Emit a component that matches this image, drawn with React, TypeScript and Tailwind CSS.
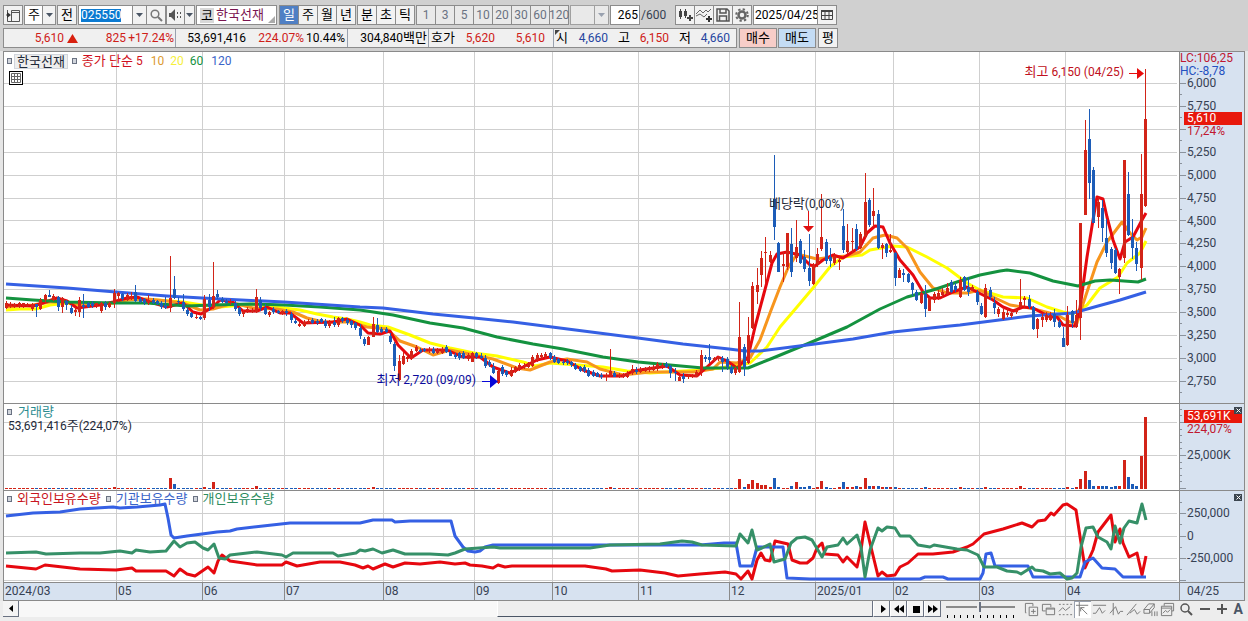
import React, { useState } from "react";

type Point = [number, number];

const FONT = "font-['Roboto','Noto_Sans_CJK_KR',sans-serif]";

// plot geometry
const FIRST_X = 6.3;
const STEP = 4.3156;
const RED = "#d22418";
const BLUE = "#1c5cb8";
const GRID = "#cfcfcf";

const months = [
  { x: 116, label: "05" },
  { x: 202, label: "06" },
  { x: 284, label: "07" },
  { x: 383, label: "08" },
  { x: 474, label: "09" },
  { x: 552, label: "10" },
  { x: 638, label: "11" },
  { x: 729, label: "12" },
  { x: 815, label: "2025/01" },
  { x: 893, label: "02" },
  { x: 979, label: "03" },
  { x: 1065, label: "04" },
];

const priceLevels = [83, 106, 129, 152, 175, 198, 220, 243, 266, 289, 312, 335, 358, 381];
const volumeLevels = [422, 455, 488];
const holdingLevels = [513, 536, 558, 580];

// one candle per trading day: direction, high, body top, body bottom, low
const candleData = `
r 301 303 308 309|r 302 304 306 308|r 303 304 307 308|r 302 303 307 308|r 303 303 306 308|r 303 304 306 307|r 303 304 309 311|b 304 304 307 317
r 298 300 309 310|r 294 295 300 303|b 290 295 297 297|r 294 296 300 301|b 296 297 307 311|r 297 298 307 313|b 300 301 305 310|b 305 308 313 314
r 307 310 312 316|r 297 300 312 317|b 294 305 307 318|b 302 303 307 308|b 301 303 306 308|r 303 303 306 308|r 302 303 311 313|b 301 303 307 310
r 302 303 307 308|r 289 293 303 308|r 292 293 296 302|b 293 294 299 301|r 293 295 300 301|r 292 296 299 300|b 285 292 301 302|b 297 299 302 303
b 298 299 303 305|r 295 300 303 305|b 298 300 303 304|b 300 301 304 305|b 301 303 307 309|b 297 305 308 309|r 256 298 308 312|b 276 289 298 299
b 297 301 302 304|b 294 302 309 311|b 308 310 314 316|b 312 313 317 318|r 314 317 318 319|b 316 317 319 320|r 295 299 318 320|b 294 300 307 311
r 262 296 307 309|b 290 294 297 299|b 297 299 302 303|b 299 301 303 304|r 299 301 303 305|b 301 303 309 311|b 307 308 314 316|r 310 312 314 317
r 307 309 311 313|r 308 310 312 313|r 289 297 312 313|b 297 300 308 311|b 304 308 314 315|r 311 312 315 317|b 307 309 312 314|b 310 311 313 314
r 310 311 314 315|b 309 311 313 316|b 312 314 320 323|b 318 321 323 324|r 321 324 326 327|r 320 322 326 327|r 319 321 323 324|b 318 320 323 324
b 319 321 323 325|b 318 319 322 323|b 319 321 326 328|r 320 322 326 328|b 317 322 325 327|r 317 318 325 327|b 317 318 321 323|b 318 320 323 325
b 320 321 325 328|b 322 323 328 330|b 324 328 336 339|b 337 339 344 346|r 336 337 345 345|r 317 324 337 337|b 318 325 332 333|b 327 329 332 333
b 327 329 332 333|b 333 336 342 344|b 342 344 366 371|r 355 361 380 381|r 352 356 364 365|r 353 357 359 362|r 349 351 358 360|r 345 347 351 352
b 348 350 352 353|b 348 349 351 352|r 347 349 351 353|b 347 349 353 354|r 348 349 353 354|r 347 349 353 354|b 345 347 352 353|b 350 352 356 356
b 353 355 357 359|b 352 353 358 360|b 351 353 358 359|r 353 355 359 361|r 352 353 362 362|b 352 353 357 359|b 353 356 358 359|b 355 358 366 368
b 360 362 365 367|b 363 367 373 374|r 369 371 383 384|b 365 367 374 376|b 370 371 375 377|r 367 370 376 377|r 366 367 372 373|r 363 365 370 371
r 363 365 367 369|r 362 363 367 368|r 355 357 366 367|r 353 355 360 362|r 353 355 357 359|r 352 354 357 359|b 352 353 358 360|b 355 357 362 363
b 358 359 363 364|b 360 362 363 365|b 359 361 363 365|b 361 362 365 367|b 363 365 369 370|b 366 367 371 372|b 365 367 371 373|b 368 370 376 377
b 370 372 376 377|b 372 373 377 377|b 373 375 377 379|r 373 375 377 381|r 349 371 376 377|b 371 373 377 377|r 373 375 377 378|r 373 374 377 378
r 371 373 377 378|r 365 369 373 375|b 367 370 372 374|r 367 369 372 373|r 367 368 371 372|r 366 367 370 372|r 365 367 370 371|r 362 364 369 371
r 363 365 367 369|b 362 364 367 368|b 365 366 373 378|b 368 372 373 381|r 375 377 381 381|b 373 376 379 383|r 374 375 377 379|r 374 376 377 378
r 370 372 377 377|r 350 355 371 376|b 355 357 359 362|b 344 357 360 363|r 357 358 361 362|r 356 357 359 361|b 356 358 362 372|b 357 359 367 370
b 365 367 373 374|r 366 368 373 375|r 302 337 372 373|b 344 347 367 376|r 317 335 363 364|r 282 286 328 329|r 268 285 292 304|r 251 258 275 287
r 237 252 253 283|r 251 255 262 263|b 155 199 227 240|b 242 243 272 272|r 252 264 266 282|r 233 233 267 270|b 228 244 272 277|r 220 247 258 262
b 239 241 263 264|b 250 257 269 272|b 234 268 281 286|r 263 265 284 285|r 248 254 264 267|r 194 237 249 251|b 239 242 261 264|b 248 257 261 267
r 253 256 263 265|r 257 260 262 270|b 209 226 250 253|r 224 241 252 254|r 228 241 242 253|b 224 229 249 251|r 232 234 248 249|r 173 202 237 238
b 198 200 225 227|r 188 211 216 227|b 210 214 248 249|r 243 245 248 259|b 243 244 253 257|r 234 250 252 253|b 252 253 278 286|r 268 270 278 278
b 269 273 275 282|b 273 274 282 283|b 282 283 290 296|b 290 292 300 301|r 290 293 303 304|b 285 294 309 317|r 297 298 311 311|r 292 294 300 303
r 290 293 297 300|r 288 292 295 298|r 283 288 294 295|b 280 282 292 293|b 283 286 290 292|r 277 280 297 298|b 276 277 290 291|b 277 287 292 296
r 285 287 290 291|b 290 292 302 305|b 303 306 314 315|r 284 288 317 318|b 287 290 297 300|b 297 303 308 314|r 307 309 314 317|r 309 312 319 320
r 308 313 315 317|r 309 313 316 318|r 308 310 312 314|r 279 302 307 308|r 296 298 300 308|b 295 299 307 309|b 306 307 329 330|r 318 319 329 338
r 313 317 320 327|r 312 315 320 322|r 312 315 320 321|b 309 314 322 327|b 320 322 327 328|b 327 338 347 347|r 306 315 345 346|b 310 311 323 328
r 300 315 327 328|r 223 223 318 340|r 120 150 215 215|b 109 139 183 199|b 167 170 223 223|r 197 202 217 228|b 200 208 228 242|b 219 238 253 257
b 247 249 263 269|b 248 250 273 274|r 268 269 277 294|r 160 160 258 263|b 172 194 235 236|b 219 237 248 259|b 242 248 264 271|r 154 194 268 280
r 69 119 206 207`;

const candles = candleData
  .trim()
  .split(/[|\n]/)
  .map((row, i) => {
    const [dir, ...v] = row.split(" ");
    const [high, top, bottom, low] = v.map(Number);
    return { x: Math.floor(FIRST_X + STEP * i), color: dir === "r" ? RED : BLUE, high, top, bottom, low };
  });

// days whose volume stands out from the baseline
const volumes: Record<number, number> = {
  25: 2, 38: 11, 39: 5, 46: 2, 48: 7, 58: 3, 85: 2, 140: 2, 170: 10, 171: 2, 172: 5, 173: 9, 174: 6, 175: 4,
  176: 4, 177: 2, 178: 11, 179: 2, 182: 3, 183: 7, 184: 2, 185: 2, 186: 3, 188: 2, 189: 8, 190: 2, 193: 2,
  194: 7, 195: 2, 196: 2, 197: 3, 198: 2, 199: 11, 200: 3, 201: 3, 202: 3, 203: 2, 204: 2, 205: 2, 206: 2,
  213: 2, 221: 2, 227: 2, 235: 3, 246: 2, 248: 2, 249: 10, 250: 18, 251: 9, 252: 3, 253: 3, 254: 3, 255: 3,
  256: 2, 257: 3, 258: 3, 259: 29, 260: 12, 261: 5, 262: 3, 263: 33, 264: 72,
};

const ma120: Point[] = [[6, 284], [67, 288], [116, 292], [167, 296], [202, 298], [284, 302], [360, 307], [383, 308], [433, 314], [474, 318], [513, 322], [552, 327], [638, 338], [683, 344], [729, 349], [745, 351], [760, 351], [815, 344], [853, 339], [893, 332], [940, 327], [960, 325], [1007, 319], [1030, 316], [1073, 313], [1098, 306], [1120, 300], [1146, 292]];
const ma60: Point[] = [[6, 298], [33, 300], [67, 302], [116, 303], [147, 303], [187, 306], [213, 305], [250, 304], [284, 305], [320, 307], [360, 310], [393, 315], [430, 323], [463, 328], [497, 337], [533, 344], [563, 349], [603, 357], [638, 362], [670, 365], [703, 368], [748, 368], [773, 358], [807, 344], [847, 327], [880, 309], [907, 297], [933, 290], [960, 281], [980, 275], [1000, 271], [1007, 270], [1030, 273], [1053, 281], [1078, 286], [1095, 281], [1110, 280], [1138, 282], [1146, 279]];
const ma20: Point[] = [[6, 310], [20, 309], [36, 309], [50, 305], [67, 303], [87, 306], [113, 303], [133, 299], [157, 300], [183, 302], [202, 305], [220, 307], [253, 304], [284, 308], [300, 310], [317, 314], [333, 317], [347, 319], [360, 322], [370, 325], [388, 327], [410, 335], [430, 343], [450, 348], [474, 353], [497, 356], [523, 362], [535, 366], [550, 363], [578, 365], [603, 367], [627, 371], [650, 373], [683, 371], [703, 370], [720, 368], [750, 363], [767, 347], [780, 327], [797, 307], [813, 288], [830, 267], [843, 257], [862, 255], [870, 250], [893, 246], [907, 247], [927, 257], [947, 268], [967, 283], [980, 290], [1003, 297], [1027, 298], [1047, 307], [1063, 312], [1073, 314], [1087, 305], [1100, 288], [1118, 277], [1127, 263], [1140, 253], [1146, 241]];
const ma10: Point[] = [[6, 307], [33, 305], [50, 302], [67, 302], [83, 305], [113, 303], [127, 300], [147, 299], [167, 301], [183, 303], [200, 310], [213, 309], [233, 303], [253, 308], [277, 309], [293, 312], [307, 318], [323, 322], [350, 322], [367, 327], [387, 329], [400, 341], [417, 347], [433, 355], [450, 350], [474, 355], [493, 359], [517, 368], [530, 370], [550, 362], [567, 359], [587, 362], [600, 369], [623, 375], [650, 372], [693, 372], [713, 369], [720, 362], [737, 363], [750, 358], [760, 340], [770, 313], [780, 287], [788, 268], [797, 254], [817, 259], [833, 257], [847, 256], [860, 252], [873, 238], [885, 235], [897, 238], [907, 248], [920, 272], [933, 288], [947, 293], [967, 293], [980, 290], [993, 297], [1010, 305], [1030, 308], [1057, 315], [1070, 322], [1077, 323], [1082, 307], [1097, 262], [1107, 242], [1122, 222], [1130, 233], [1137, 240], [1142, 237], [1146, 228]];
const ma5: Point[] = [[6, 305], [33, 306], [43, 303], [57, 298], [67, 301], [77, 308], [100, 305], [113, 302], [127, 298], [137, 297], [150, 302], [167, 307], [183, 303], [193, 312], [201, 314], [213, 307], [220, 300], [233, 302], [243, 311], [257, 311], [267, 307], [280, 313], [290, 313], [303, 323], [333, 322], [347, 319], [360, 325], [368, 333], [380, 334], [390, 331], [398, 345], [411, 358], [423, 350], [447, 350], [463, 357], [480, 357], [493, 367], [510, 373], [523, 367], [537, 360], [550, 357], [567, 361], [583, 370], [600, 376], [623, 376], [633, 371], [667, 366], [680, 375], [697, 376], [707, 367], [718, 357], [727, 361], [737, 368], [748, 357], [755, 327], [763, 297], [772, 263], [777, 254], [787, 252], [800, 255], [810, 265], [815, 266], [823, 260], [833, 255], [843, 258], [860, 247], [867, 233], [875, 226], [883, 227], [890, 243], [900, 260], [913, 275], [923, 292], [930, 298], [940, 298], [953, 292], [967, 287], [983, 295], [993, 300], [1003, 307], [1013, 311], [1023, 307], [1033, 308], [1050, 317], [1057, 317], [1063, 325], [1075, 326], [1080, 308], [1087, 257], [1093, 220], [1097, 197], [1103, 199], [1107, 217], [1113, 240], [1120, 259], [1125, 242], [1133, 237], [1142, 220], [1146, 213]];

const institutions: Point[] = [[6, 516], [33, 513], [60, 512], [80, 509], [113, 507], [120, 508], [137, 507], [160, 505], [165, 504], [168, 518], [171, 535], [174, 538], [187, 536], [202, 534], [217, 532], [230, 531], [237, 529], [263, 526], [290, 523], [360, 523], [373, 520], [392, 520], [395, 522], [410, 521], [451, 521], [455, 536], [463, 547], [468, 551], [475, 552], [480, 551], [485, 547], [493, 545], [605, 545], [700, 545], [724, 543], [736, 543], [740, 566], [752, 566], [757, 547], [783, 547], [787, 578], [810, 579], [920, 579], [925, 577], [943, 577], [948, 579], [980, 579], [983, 573], [986, 554], [991, 553], [995, 566], [1028, 566], [1033, 577], [1080, 577], [1085, 562], [1093, 558], [1102, 568], [1115, 569], [1123, 577], [1146, 577]];
const individuals: Point[] = [[6, 553], [36, 552], [46, 554], [80, 553], [100, 553], [120, 551], [132, 553], [136, 550], [150, 552], [166, 551], [174, 541], [180, 547], [187, 543], [195, 542], [203, 548], [208, 550], [214, 544], [219, 558], [225, 559], [230, 555], [257, 552], [282, 555], [286, 557], [293, 553], [333, 553], [338, 556], [356, 553], [360, 550], [365, 551], [373, 549], [382, 553], [393, 550], [405, 554], [430, 554], [448, 555], [455, 553], [465, 549], [493, 547], [500, 548], [590, 548], [610, 545], [660, 544], [682, 541], [692, 542], [702, 545], [736, 546], [740, 534], [748, 543], [752, 530], [757, 550], [762, 548], [770, 544], [774, 562], [785, 559], [791, 543], [797, 538], [805, 537], [812, 540], [822, 557], [827, 547], [838, 545], [843, 538], [847, 544], [857, 535], [861, 547], [865, 577], [870, 550], [878, 528], [882, 531], [887, 527], [895, 528], [900, 536], [910, 536], [918, 545], [930, 547], [934, 545], [957, 549], [967, 550], [978, 555], [984, 567], [997, 567], [1007, 571], [1017, 572], [1021, 574], [1032, 567], [1035, 570], [1043, 571], [1050, 574], [1060, 573], [1067, 579], [1072, 578], [1077, 573], [1081, 547], [1086, 528], [1093, 527], [1098, 537], [1107, 542], [1111, 549], [1115, 526], [1120, 543], [1124, 528], [1129, 521], [1137, 523], [1142, 504], [1146, 520]];
const foreigners: Point[] = [[6, 566], [36, 569], [45, 565], [80, 569], [116, 570], [132, 568], [136, 571], [166, 571], [174, 576], [180, 569], [187, 574], [195, 576], [208, 567], [214, 573], [218, 561], [222, 555], [230, 561], [257, 565], [282, 565], [286, 562], [297, 566], [320, 562], [340, 562], [355, 565], [363, 568], [368, 566], [373, 569], [385, 564], [393, 567], [405, 563], [420, 564], [440, 562], [455, 564], [465, 563], [470, 565], [482, 566], [493, 568], [498, 565], [505, 567], [512, 566], [585, 566], [606, 569], [612, 571], [640, 570], [665, 573], [678, 576], [700, 574], [725, 572], [736, 574], [741, 579], [748, 571], [752, 579], [757, 560], [761, 553], [765, 560], [770, 561], [775, 541], [788, 544], [792, 560], [800, 563], [807, 563], [813, 558], [817, 548], [822, 543], [825, 554], [838, 555], [843, 562], [847, 557], [857, 567], [861, 550], [865, 522], [870, 543], [878, 576], [882, 572], [887, 576], [895, 575], [900, 567], [908, 563], [918, 554], [933, 554], [953, 552], [967, 547], [973, 544], [984, 534], [1003, 529], [1022, 523], [1032, 527], [1038, 521], [1045, 520], [1051, 513], [1054, 515], [1063, 505], [1067, 504], [1076, 510], [1081, 543], [1085, 568], [1093, 550], [1098, 532], [1111, 515], [1115, 542], [1120, 529], [1123, 543], [1129, 557], [1137, 553], [1142, 575], [1146, 556]];

const Line = ({ points, color }: { points: Point[]; color: string }) => (
  <polyline points={points.map((p) => p.join(",")).join(" ")} fill="none" stroke={color} strokeWidth={3} strokeLinejoin="round" />
);

const Grid = ({ levels, top, bottom }: { levels: number[]; top: number; bottom: number }) => (
  <g fill={GRID}>
    {levels.map((y) => (
      <rect key={y} x={4} y={y} width={1173} height={1} />
    ))}
    {months.map((m) => (
      <rect key={m.x} x={m.x} y={top} width={1} height={bottom - top} />
    ))}
  </g>
);

const Ticks = ({ top, height, major, minor }: { top: number; height: number; major: number[]; minor: number[] }) => (
  <svg className="absolute left-0 top-0 w-[65px] h-full" viewBox={`0 ${top} 65 ${height}`} preserveAspectRatio="none" fill="#8a929c">
    {major.map((y) => (
      <rect key={y} x={0} y={y} width={6} height={1} />
    ))}
    {minor.map((y) => (
      <rect key={y} x={0} y={y} width={2} height={1} />
    ))}
  </svg>
);

const Marker = () => <span className="w-[5px] h-[6px] border border-gray-500 bg-gray-300" />;

const Caret = ({ muted }: { muted?: boolean }) => (
  <svg className={`w-[7px] h-1 ${muted ? "text-gray-400" : "text-gray-600"}`} viewBox="0 0 7 4" fill="currentColor">
    <path d="M0 0h7L3.500 4z" />
  </svg>
);

const ToolButton = ({ children, active, muted, label, className = "w-5" }: {
  children: React.ReactNode;
  active?: boolean;
  muted?: boolean;
  label?: string;
  className?: string;
}) => (
  <button
    aria-label={label}
    className={`h-5 shrink-0 flex items-center justify-center border border-[#8c8c8c] text-[13px] leading-4 ${className} ${
      active ? "bg-[#4f7fc4] text-white" : muted ? "bg-[#e9e9e9] text-gray-500" : "bg-[#f2f2f2] text-black"
    }`}
  >
    {children}
  </button>
);

const CloseBox = () => (
  <button aria-label="닫기" className="absolute right-[2px] top-[3px] w-2 h-[7px] bg-[#3c4650] flex items-center justify-center">
    <svg className="w-[5px] h-[5px]" viewBox="0 0 5 5" stroke="white">
      <path d="M.5.5l4 4M4.500.5l-4 4" />
    </svg>
  </button>
);

const Toolbar = () => {
  const [period, setPeriod] = useState("일");
  return (
    <div className="flex items-center gap-px pl-[3px] h-5">
      <ToolButton label="창 열기">
        <svg className="w-4 h-4" viewBox="0 0 16 16" fill="none" stroke="#555">
          <path d="M2.500 3v11.500h12v-11h-8M6.500 3.500v11M6.500 5.500h8M1 8h2" />
          <path d="M2 5l4 3-4 3z" fill="#333" stroke="none" />
        </svg>
      </ToolButton>
      <div className="relative flex w-8 h-5">
        <select aria-label="구분" className="w-full h-5 appearance-none border border-[#8c8c8c] bg-white pl-[3px] text-[13px] leading-4">
          <option>주</option>
        </select>
        <span className="absolute right-px top-px w-[13px] h-[18px] border-l border-[#8c8c8c] bg-[#f2f2f2] flex items-center justify-center pointer-events-none">
          <Caret />
        </span>
      </div>
      <ToolButton>전</ToolButton>
      <div className="flex">
        <div className="w-[55px] h-5 border border-[#8c8c8c] bg-white flex items-center">
          <input
            aria-label="종목코드"
            defaultValue="025550"
            className="ml-[2px] w-[40px] h-[13px] bg-[#0b7ad1] text-white text-[12px] leading-3 p-0 outline-none"
          />
        </div>
        <ToolButton label="종목 목록" className="w-[15px] -ml-px"><Caret /></ToolButton>
        <ToolButton label="검색" className="w-5 -ml-px">
          <svg className="w-[13px] h-[13px]" viewBox="0 0 13 13" fill="none" stroke="#777" strokeWidth="1.500">
            <circle cx="5" cy="5" r="3.800" />
            <path d="M8 8l4 4" strokeWidth="2" />
          </svg>
        </ToolButton>
        <ToolButton label="소리" className="w-[19px]">
          <svg className="w-[13px] h-3" viewBox="0 0 13 12" fill="#555">
            <path d="M0 4h2l4-4v12l-4-4h-2zM8 3h1v2h-1zM8 7h1v2h-1zM11 3h1v2h-1zM11 7h1v2h-1z" />
          </svg>
        </ToolButton>
        <ToolButton label="소리 설정" className="w-[11px] -ml-px"><Caret /></ToolButton>
      </div>
      <div className="relative w-[81px] h-5 border border-[#8c8c8c] bg-white flex items-center text-[13px] leading-4">
        <span className="ml-[3px] w-[14px] h-[15px] bg-[#d8d8d8] flex items-center justify-center leading-[15px]">코</span>
        <span className="ml-[2px] text-[#7a1450] whitespace-nowrap">한국선재</span>
        <svg className="absolute right-px bottom-px w-[7px] h-[7px]" viewBox="0 0 7 7" fill="#aaa"><path d="M7 0v7h-7z" /></svg>
      </div>
      <div className="flex ml-px">
        {["일", "주", "월", "년"].map((p) => (
          <button
            key={p}
            onClick={() => setPeriod(p)}
            className={`w-5 -mr-px h-5 border border-[#8c8c8c] text-[13px] leading-4 ${period === p ? "bg-[#4f7fc4] text-white" : "bg-[#f2f2f2]"}`}
          >
            {p}
          </button>
        ))}
      </div>
      <div className="flex ml-px">
        {["분", "초", "틱"].map((p) => (
          <ToolButton key={p} className="w-5 -mr-px">{p}</ToolButton>
        ))}
      </div>
      <div className="flex ml-px">
        {["1", "3", "5", "10", "20", "30", "60", "120"].map((p) => (
          <ToolButton key={p} muted className="w-5 -mr-px"><span className="text-[12px]">{p}</span></ToolButton>
        ))}
      </div>
      <button aria-label="주기 선택" className="ml-px w-[39px] h-5 border border-[#a0a0a0] bg-[#e9e9e9] flex justify-end">
        <span className="w-[14px] h-full border-l border-[#a0a0a0] flex items-center justify-center"><Caret muted /></span>
      </button>
      <label className="flex items-center text-[12px] text-gray-700 w-16">
        <input aria-label="표시 개수" defaultValue="265" className="w-[30px] h-5 border border-[#8c8c8c] bg-white text-right text-black px-px" />
        <span className="ml-px">/600</span>
      </label>
      <div className="flex">
        <ToolButton label="차트 추가" className="w-5 -mr-px">
          <svg className="w-4 h-4" viewBox="0 0 16 16" fill="#444">
            <path d="M2 4h3v6h-3zM3 2h1v10h-1zM7 4h3v5h-3zM8 2h1v9h-1zM12 8h2v2h2v2h-2v2h-2v-2h-2v-2h2z" />
          </svg>
        </ToolButton>
        <ToolButton label="지표 추가" className="w-5 -mr-px">
          <svg className="w-4 h-4" viewBox="0 0 16 16" fill="none" stroke="#666">
            <path d="M0 7l4-4 3 3 3-3 2 2 3-3M0 9l4-2 4 3 3-3" />
            <path d="M12 9h2v2h2v2h-2v2h-2v-2h-2v-2h2z" fill="#333" stroke="none" />
          </svg>
        </ToolButton>
        <ToolButton label="저장" className="w-5 -mr-px">
          <svg className="w-[14px] h-[14px]" viewBox="0 0 14 14" fill="none" stroke="#555" strokeWidth="1.500">
            <path d="M1 1h10l2 2v10h-12zM4 1v4h6v-4M3.500 13v-5h7v5" />
          </svg>
        </ToolButton>
        <ToolButton label="설정" className="w-5">
          <svg className="w-[14px] h-[14px]" viewBox="0 0 14 14" fill="none" stroke="#666">
            <circle cx="7" cy="7" r="3.500" strokeWidth="2.500" />
            <circle cx="7" cy="7" r="5.800" strokeWidth="2" strokeDasharray="2.300 2.250" />
          </svg>
        </ToolButton>
      </div>
      <div className="flex">
        <input aria-label="날짜" defaultValue="2025/04/25" className="w-[65px] h-5 border border-[#8c8c8c] bg-white text-[12px] pl-px" />
        <ToolButton label="달력" className="w-5 -ml-px">
          <svg className="w-3 h-3" viewBox="0 0 12 12" fill="none" stroke="#444">
            <path d="M.5 1.500h11v9h-11zM4 3v7M8 3v7M.5 6.500h11" />
            <path d="M0 1h12v2h-12z" fill="#444" stroke="none" />
          </svg>
        </ToolButton>
      </div>
    </div>
  );
};

const QuoteBar = () => (
  <div className="flex gap-px pl-[3px] h-5 mt-[3px] whitespace-nowrap text-[12px] leading-[18px]">
    <div className="flex h-5 w-[734px] border border-[#8c8c8c] bg-[#f0f0f0] text-right">
      <div className="flex items-center w-[172px] border-r border-gray-400 text-[#cf2018]">
        <span className="w-[60px]">5,610</span>
        <svg className="ml-[3px] w-[11px] h-[9px]" viewBox="0 0 11 9" fill="#d8200f"><path d="M5.500 0l5.500 9h-11z" /></svg>
        <span className="w-12">825</span>
        <span className="w-12">+17.24%</span>
      </div>
      <div className="flex w-[172px] border-r border-gray-400">
        <span className="w-[70px]">53,691,416</span>
        <span className="w-[58px] text-[#cf2018]">224.07%</span>
        <span className="w-[41px]">10.44%</span>
      </div>
      <div className="w-[81px] pr-px border-r border-gray-400">304,840<span className="text-[13px]">백만</span></div>
      <div className="flex w-[125px] border-r border-gray-400 text-[#cf2018]">
        <span className="w-[26px] text-[13px] text-black">호가</span>
        <span className="w-[40px]">5,620</span>
        <span className="w-[50px]">5,610</span>
      </div>
      <div className="relative flex text-[#2545a0]">
        <svg className="absolute left-px top-px w-[5px] h-[5px]" viewBox="0 0 5 5" fill="#444"><path d="M0 0h5l-5 5z" /></svg>
        <span className="w-[14px] text-[13px] text-black">시</span>
        <span className="w-[40px]">4,660</span>
        <span className="w-[22px] text-[13px] text-black">고</span>
        <span className="w-[39px] text-[#cf2018]">6,150</span>
        <span className="w-[22px] text-[13px] text-black">저</span>
        <span className="w-[39px]">4,660</span>
      </div>
    </div>
    <button className="ml-px w-[38px] h-5 border border-[#8c8c8c] bg-[#f7cdc8] text-[13px]">매수</button>
    <button className="w-[38px] h-5 border border-[#8c8c8c] bg-[#c4dcf4] text-[13px]">매도</button>
    <button className="ml-px w-5 h-5 border border-[#8c8c8c] bg-[#f2f2f2] text-[13px]">평</button>
  </div>
);

const PricePanel = () => (
  <section className="flex h-[352px] border-b border-[#8a8a8a]">
    <div className="relative flex-1 bg-white">
      <svg className="block w-full h-[351px]" viewBox="4 52 1175 351" preserveAspectRatio="none">
        <Grid levels={priceLevels} top={52} bottom={403} />
        <Line points={ma20} color="#ffff00" />
        <Line points={ma10} color="#f7951d" />
        <Line points={ma5} color="#e6080f" />
        <Line points={ma60} color="#14923f" />
        <Line points={ma120} color="#3560e4" />
        {candles.map((c) => (
          <g key={c.x} fill={c.color}>
            <rect x={c.x} y={c.high} width={1} height={c.low - c.high} />
            <rect x={c.x - 1} y={c.top} width={3} height={Math.max(1, c.bottom - c.top)} />
          </g>
        ))}
        <path d="M808 211h1v15h5l-5.500 6-5.500-6h5z" fill="#e01010" />
        <path d="M1129 73h8v-5l7 5.500-7 5.500v-5h-8z" fill="#e80c0c" />
        <path d="M482 381h8v-6l8 6.500-8 6.500v-6h-8z" fill="#0808d8" />
      </svg>
      <div className="absolute left-[3px] top-px flex items-center h-4 text-[12px] leading-[14px] whitespace-nowrap">
        <Marker />
        <span className="ml-[2px] px-[2px] h-[15px] border border-gray-300 bg-[#eeeeee] text-[13px] text-gray-800">한국선재</span>
        <span className="ml-1 mr-[5px] flex"><Marker /></span>
        <span className="text-[#cf1020] text-[13px]">종가 단순</span>
        <span className="ml-[3px] text-[#cf1020]">5</span>
        <span className="ml-2 text-[#dc9a30]">10</span>
        <span className="ml-[6px] text-[#f6f03c]">20</span>
        <span className="ml-[6px] text-[#14923f]">60</span>
        <span className="ml-2 text-[#3a64c8]">120</span>
      </div>
      <button aria-label="데이터 표" className="absolute left-[5px] top-[19px] w-[14px] h-[14px] border border-black bg-white p-px">
        <svg className="w-full h-full" viewBox="0 0 10 10" fill="none" stroke="#666">
          <path d="M.5.5h9v9h-9zM3.500.5v9M6.500.5v9M.5 3.500h9M.5 6.500h9" />
        </svg>
      </button>
      <span className="absolute left-[65.1%] top-[144px] text-[12px] leading-4 text-gray-800 whitespace-nowrap">
        <span className="text-[13px]">배당락</span>(0,00%)
      </span>
      <span className="absolute right-[55px] top-3 text-[12px] leading-4 text-[#c01020] whitespace-nowrap">
        <span className="text-[13px]">최고</span> 6,150 (04/25)
      </span>
      <span className="absolute left-[31.7%] top-80 text-[12px] leading-4 text-[#0a0a9c] whitespace-nowrap">
        <span className="text-[13px]">최저</span> 2,720 (09/09)
      </span>
    </div>
    <div className="relative w-[65px] border-l border-[#8a8a8a] bg-[#d7e2f0] text-[12px] text-gray-700">
      <Ticks top={52} height={351} major={priceLevels} minor={priceLevels.map((y) => y + 11)} />
      <ul className="mt-[23px] h-[314px] pl-[7px] flex flex-col justify-between leading-4">
        {["6,000", "5,750", "5,500", "5,250", "5,000", "4,750", "4,500", "4,250", "4,000", "3,750", "3,500", "3,250", "3,000", "2,750"].map((p) => (
          <li key={p} className={p === "5,500" ? "invisible" : ""}>{p}</li>
        ))}
      </ul>
      <div className="absolute left-0 top-0 w-[63px] h-[26px] bg-[#d7e2f0] leading-[13px]">
        <p className="text-[#c01830]">LC:106,25</p>
        <p className="text-[#2450c0]">HC:-8,78</p>
      </div>
      <div className="absolute left-1 top-[60px] w-[58px] pl-[3px] leading-[13px]">
        <p className="-ml-[3px] pl-[3px] bg-[#e8180c] text-white">5,610</p>
        <p className="text-[#c01830]">17,24%</p>
      </div>
    </div>
  </section>
);

const VolumePanel = () => (
  <section className="flex h-[87px] border-b border-[#8a8a8a]">
    <div className="relative flex-1 bg-white">
      <svg className="block w-full h-[86px]" viewBox="4 404 1175 86" preserveAspectRatio="none">
        <Grid levels={volumeLevels.slice(0, 2)} top={404} bottom={490} />
        {candles.map((c, i) => {
          const h = volumes[i] ?? 1;
          return <rect key={c.x} x={c.x - 1} y={489 - h} width={3} height={h} fill={c.color} />;
        })}
      </svg>
      <div className="absolute left-[3px] top-0 text-[12px] leading-[14px] whitespace-nowrap">
        <div className="flex items-center gap-[6px] h-[15px]">
          <Marker />
          <span className="text-[13px] text-[#2c8c90]">거래량</span>
        </div>
        <p className="pl-px text-gray-800">53,691,416<span className="text-[13px]">주</span>(224,07%)</p>
      </div>
    </div>
    <div className="relative w-[65px] border-l border-[#8a8a8a] bg-[#d7e2f0] text-[12px] text-gray-700">
      <Ticks top={404} height={86} major={volumeLevels} minor={[409, 415, 429, 435, 442, 448, 462, 468, 475, 481]} />
      <div className="absolute left-1 top-[6px] w-[58px] leading-[13px]">
        <p className="pl-[3px] bg-[#e8180c] text-white">53,691K</p>
        <p className="pl-[3px] text-[#c01830]">224,07%</p>
      </div>
      <p className="pt-[43px] pl-[7px] leading-4">25,000K</p>
      <CloseBox />
    </div>
  </section>
);

const HoldingsPanel = () => (
  <section className="flex h-[92px] border-b border-[#8a8a8a]">
    <div className="relative flex-1 bg-white">
      <svg className="block w-full h-[91px]" viewBox="4 491 1175 91" preserveAspectRatio="none">
        <Grid levels={holdingLevels} top={491} bottom={582} />
        <Line points={foreigners} color="#e6080f" />
        <Line points={institutions} color="#3560e4" />
        <Line points={individuals} color="#369068" />
      </svg>
      <div className="absolute left-[3px] top-0 flex items-center gap-[5px] h-4 text-[13px] leading-4 whitespace-nowrap">
        <Marker />
        <span className="text-[#c81420]">외국인보유수량</span>
        <Marker />
        <span className="text-[#3a64c8]">기관보유수량</span>
        <Marker />
        <span className="text-[#2c8c60]">개인보유수량</span>
      </div>
    </div>
    <div className="relative w-[65px] border-l border-[#8a8a8a] bg-[#d7e2f0] text-[12px] text-gray-700">
      <Ticks top={491} height={91} major={holdingLevels} minor={[502, 524, 547, 569]} />
      <ul className="mt-[14px] h-[61px] pl-[7px] flex flex-col justify-between leading-4">
        <li>250,000</li>
        <li>0</li>
        <li>-250,000</li>
      </ul>
      <CloseBox />
    </div>
  </section>
);

const TimeAxis = () => (
  <div className="flex h-[17px] bg-[#d7e2f0] text-[12px] leading-[17px] text-gray-700">
    <div className="relative flex-1 pl-px">
      2024/03
      {months.map((m) => (
        <span key={m.x} className="absolute top-0 h-full border-l border-[#8a8a8a] pl-px" style={{ left: `${((m.x - 4) / 1175) * 100}%` }}>
          {m.label}
        </span>
      ))}
    </div>
    <div className="w-[65px] border-l border-[#8a8a8a] pl-[7px]">04/25</div>
  </div>
);

const drawTools = [
  { label: "새 창", d: "M2.500 11.500h-1v-10h8v3M5.500 5.500h9v9h-9zM10 7.500v5M7.500 10h5" },
  { label: "복사", d: "M5 9.500h-3.500v-7h9v3M5.500 6.500h9v7h-9zM5.500 7.500h9" },
  { label: "구간", d: "M1 2.500h2M5 2.500h2M9 2.500h2M13 2.500h2M1 13.500h2M5 13.500h2M9 13.500h2M13 13.500h2M1 10l4-4 3 3 5-4" },
  { label: "십자선", d: "M0 3.500h13M3.500 0v15M5 6l7 7M5 6h4M5 6v4" },
  { label: "수평선", d: "M1 3.500h14M1 12h3l4-6 3 6 3-3" },
  { label: "수직선", d: "M4.500 1v13M1 12l6-7 3 8 2-3h3" },
  { label: "추세선", d: "M1 14l10-12M4 12l5-4 3 5 3-3" },
  { label: "지우개", d: "M1 8l5-6h6l-5 6zM1 8v4h6v-4M7 12l5-6v-4M9.500 10v5M12.500 10v5M15 10v5" },
  { label: "차트 겹침", d: "M4.500 4v-2.500h10v8h-2M1.500 4.500h11v10h-11zM1.500 6.500h11M3 12l3-3 2 2 3-3" },
];

const BottomBar = () => (
  <div className="flex items-start h-5 bg-[#ededed]">
    <button aria-label="이전" className="ml-[3px] w-4 h-4 shrink-0 bg-[#f4f4f4] border-r border-b border-gray-500 flex items-center justify-center">
      <svg className="w-1 h-[7px]" viewBox="0 0 4 7"><path d="M4 0v7l-4-3.500z" /></svg>
    </button>
    <div role="scrollbar" aria-controls="chart" aria-valuenow={100} className="flex-1 flex h-4 bg-[#f8f8f8]">
      <div className="ml-auto w-[44%] h-4 bg-[#eeeeee] border-l border-l-white border-r border-b border-r-gray-500 border-b-gray-600" />
    </div>
    {[
      { label: "재생", d: "M4 1l5 4-5 4z" },
      { label: "뒤로", d: "M5 1v8l-5-4zM10 1v8l-5-4z" },
      { label: "정지", d: "M2 2h7v7h-7z" },
      { label: "앞으로", d: "M0 1l5 4-5 4zM5 1l5 4-5 4z" },
    ].map((b) => (
      <button key={b.label} aria-label={b.label} className="w-[17px] h-4 shrink-0 bg-[#f4f4f4] border-l border-l-white border-r border-b border-r-gray-500 border-b-gray-500 flex items-center justify-center">
        <svg className="w-[10px] h-[10px]" viewBox="0 0 10 10"><path d={b.d} /></svg>
      </button>
    ))}
    <div className="ml-[5px] w-[69px] shrink-0">
      <input
        type="range"
        aria-label="재생 속도"
        defaultValue={47}
        className="block w-full h-3 appearance-none bg-transparent [&::-webkit-slider-runnable-track]:h-[2px] [&::-webkit-slider-runnable-track]:bg-[#8a8a8a] [&::-webkit-slider-thumb]:appearance-none [&::-webkit-slider-thumb]:w-1 [&::-webkit-slider-thumb]:h-[10px] [&::-webkit-slider-thumb]:-mt-1 [&::-webkit-slider-thumb]:bg-[#eeeeee] [&::-webkit-slider-thumb]:border-r-2 [&::-webkit-slider-thumb]:border-gray-500"
      />
      <div className="flex justify-between px-px mt-[2px]">
        {Array.from({ length: 11 }, (_, i) => (
          <span key={i} className="w-px h-[3px] bg-black" />
        ))}
      </div>
    </div>
    <div className="ml-2 mr-[5px] flex items-center h-4 shrink-0">
      {drawTools.map((t, i) => (
        <button key={t.label} aria-label={t.label} className={`w-[17px] h-[17px] flex items-center justify-center ${i === 3 ? "bg-white border-l border-t border-gray-400" : ""}`}>
          <svg className="w-[15px] h-[15px]" viewBox="0 0 16 16" fill="none" stroke="#777"><path d={t.d} /></svg>
        </button>
      ))}
      <button aria-label="찾기" className="w-5 flex justify-center">
        <svg className="w-[13px] h-[13px]" viewBox="0 0 13 13" fill="none" stroke="#555" strokeWidth="1.500">
          <circle cx="5" cy="5" r="4" />
          <path d="M8 8l4 4" strokeWidth="2" />
        </svg>
      </button>
      <button aria-label="축소" className="w-[14px] flex justify-end">
        <svg className="w-[10px] h-[10px]" viewBox="0 0 10 10" fill="#555"><path d="M0 4h10v2h-10z" /></svg>
      </button>
      <button aria-label="확대" className="w-[17px] flex justify-end">
        <svg className="w-[10px] h-[10px]" viewBox="0 0 10 10" fill="#555"><path d="M0 4h4v-4h2v4h4v2h-4v4h-2v-4h-4z" /></svg>
      </button>
      <button className="w-4 text-right text-[14px] leading-4 font-bold text-gray-600">A</button>
    </div>
  </div>
);

const App = () => {
  return (
    <div className={`w-full min-h-screen bg-[#e6e6e6] text-black ${FONT}`}>
      <header className="bg-[#d0d0d0] pt-[5px] pb-[3px]">
        <Toolbar />
        <QuoteBar />
      </header>
      <main id="chart" className="mx-[3px] border border-[#8a8a8a]">
        <PricePanel />
        <VolumePanel />
        <HoldingsPanel />
        <TimeAxis />
      </main>
      <BottomBar />
    </div>
  );
};

export default App;
